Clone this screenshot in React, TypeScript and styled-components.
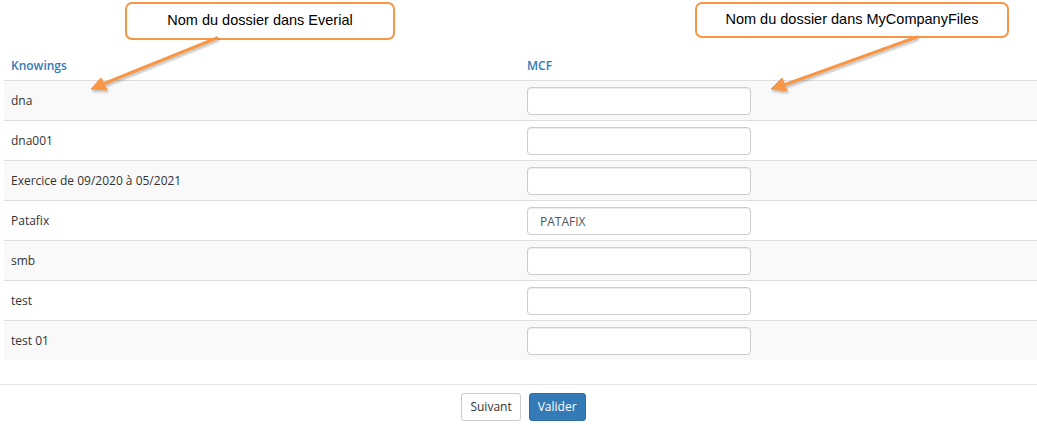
import { Fragment } from "react";
import styled, { createGlobalStyle } from "styled-components";

const GlobalStyle = createGlobalStyle`
  html, body {
    margin: 0;
    padding: 0;
    background: #fff;
  }
  body {
    font-family: "Open Sans", "Liberation Sans", sans-serif;
    font-size: 12px;
    color: #333;
  }
`;

const Page = styled.div`
  position: relative;
  width: 1037px;
  height: 425px;
  overflow: hidden;
  padding-top: 47px;
  box-sizing: border-box;
`;

const Table = styled.div`
  margin-left: 4px;
  display: grid;
  grid-template-columns: 516px 1fr;
`;

const HeadCell = styled.div`
  height: 33px;
  box-sizing: border-box;
  padding: 0 7px 6px;
  display: flex;
  align-items: flex-end;
  font-weight: 600;
  color: #337ab7;
  line-height: 17px;
`;

const Cell = styled.div<{ $striped: boolean }>`
  height: 40px;
  box-sizing: border-box;
  border-top: 1px solid #ddd;
  padding: 0 7px;
  display: flex;
  align-items: center;
  background: ${(p) => (p.$striped ? "#f9f9f9" : "#fff")};
`;

const Field = styled.input`
  width: 224px;
  height: 28px;
  box-sizing: border-box;
  margin-top: 1px;
  padding: 0 12px;
  border: 1px solid #ccc;
  border-radius: 4px;
  background: #fff;
  font-family: "Open Sans", "Liberation Sans", sans-serif;
  font-size: 12px;
  color: #555;
  box-shadow: inset 0 1px 1px rgba(0, 0, 0, 0.075);
  outline: none;
`;

const Footer = styled.div`
  margin-top: 24px;
  border-top: 1px solid #e5e5e5;
  padding: 8px 0 0 10px;
  display: flex;
  justify-content: center;
  gap: 8px;
`;

const Button = styled.button<{ $primary?: boolean }>`
  height: 28px;
  padding: 0 8px;
  border-radius: 3px;
  font-family: "Open Sans", "Liberation Sans", sans-serif;
  font-size: 12px;
  line-height: 1;
  cursor: pointer;
  border: 1px solid ${(p) => (p.$primary ? "#2e6da4" : "#ccc")};
  background: ${(p) => (p.$primary ? "#337ab7" : "#fff")};
  color: ${(p) => (p.$primary ? "#fff" : "#333")};
`;

const Callout = styled.div<{ $left: number; $width: number; $height: number }>`
  position: absolute;
  top: 2px;
  left: ${(p) => p.$left}px;
  width: ${(p) => p.$width}px;
  height: ${(p) => p.$height}px;
  box-sizing: border-box;
  border: 2px solid #f79646;
  border-radius: 7px;
  background: #fff;
  display: flex;
  align-items: center;
  justify-content: center;
  padding-bottom: 2px;
  font-family: "Liberation Sans", Arial, sans-serif;
  font-size: 14.5px;
  color: #000;
`;

const ArrowLayer = styled.svg`
  position: absolute;
  left: 0;
  top: 0;
  pointer-events: none;
`;

const rows = [
  { name: "dna", value: "" },
  { name: "dna001", value: "" },
  { name: "Exercice de 09/2020 à 05/2021", value: "" },
  { name: "Patafix", value: "PATAFIX" },
  { name: "smb", value: "" },
  { name: "test", value: "" },
  { name: "test 01", value: "" },
];

export default function App() {
  return (
    <>
      <GlobalStyle />
      <Page>
        <Table>
          <HeadCell>Knowings</HeadCell>
          <HeadCell>MCF</HeadCell>
          {rows.map((r, i) => (
            <Fragment key={r.name}>
              <Cell $striped={i % 2 === 0}>{r.name}</Cell>
              <Cell $striped={i % 2 === 0}>
                <Field defaultValue={r.value} />
              </Cell>
            </Fragment>
          ))}
        </Table>
        <Footer>
          <Button>Suivant</Button>
          <Button $primary>Valider</Button>
        </Footer>

        <Callout $left={125} $width={270} $height={38}>
          Nom du dossier dans Everial
        </Callout>
        <Callout $left={695} $width={314} $height={36}>
          Nom du dossier dans MyCompanyFiles
        </Callout>

        <ArrowLayer width="1037" height="425" viewBox="0 0 1037 425">
          <defs>
            <filter id="sh" x="-20%" y="-20%" width="140%" height="140%">
              <feDropShadow dx="1" dy="2" stdDeviation="1.2" floodColor="#000" floodOpacity="0.25" />
            </filter>
          </defs>
          <g fill="#f79646" stroke="#f79646" filter="url(#sh)">
            <line x1="217" y1="38" x2="103" y2="84" strokeWidth="3" strokeLinecap="round" />
            <polygon points="91,89 101,78 107,90" strokeWidth="1" strokeLinejoin="round" />
            <line x1="917" y1="37" x2="784" y2="85" strokeWidth="3" strokeLinecap="round" />
            <polygon points="771,89 782,78 787,91" strokeWidth="1" strokeLinejoin="round" />
          </g>
        </ArrowLayer>
      </Page>
    </>
  );
}
